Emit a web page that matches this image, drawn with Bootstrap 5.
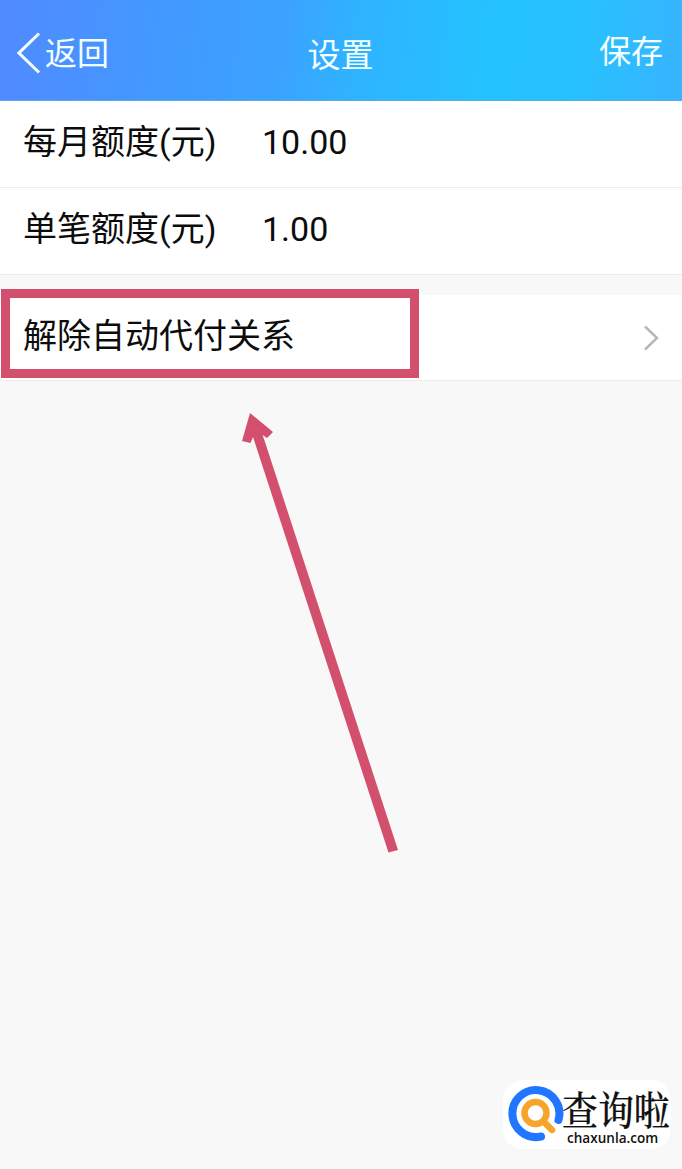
<!DOCTYPE html>
<html lang="zh-CN">
<head>
<meta charset="utf-8">
<meta name="viewport" content="width=device-width, initial-scale=1">
<title>设置</title>
<link href="https://cdn.jsdelivr.net/npm/bootstrap@5.3.0/dist/css/bootstrap.min.css" rel="stylesheet">
<style>
body{background:#f8f8f8;font-family:Roboto,"Noto Sans CJK SC",sans-serif;color:#0c0c0c;font-size:34px;line-height:50px;min-height:1169px;overflow:hidden}
.topbar{height:101px;padding:7px 19px 0 17px;background:linear-gradient(97deg,#518aff 0%,#4299ff 24%,#3ba3ff 42%,#2fb3ff 52%,#24c3ff 72%,#27c1ff 84%,#38b4ff 100%);color:#f4ffff;font-size:32px;border-bottom:1px solid #58a9e4}
.topbar .title{font-size:33px;padding:4px 0 0 1px}
.topbar .save{margin-top:-3px}
.side{width:110px}
.setting{height:87px;padding:0 23px;border-bottom:1px solid #ececec;background:#fff}
.setting.unbind{height:86px}
.setting .caption{width:239px}
.setting .txt{position:relative;top:-2px}
.gap-row{height:20px}
.marker{left:1px;top:-6px;width:418px;height:89px;border:9.5px solid #d2506d}
.pointer{left:230px;top:400px}
.watermark{left:503px;top:1080px;width:168px;height:69px;background:#fff;border-radius:20px}
.brand{left:59px;top:8px;font-family:"Noto Serif CJK SC","Noto Sans CJK SC",serif;font-weight:500;font-size:38px;line-height:40px;color:#111;-webkit-text-stroke:.2px #111;transform:scale(.945,1.04);transform-origin:0 0;white-space:nowrap}
.domain{left:64px;top:51px;font-family:"Open Sans",sans-serif;font-weight:600;font-size:14.5px;line-height:14px;color:#111;transform:scaleX(.935);transform-origin:0 0}
</style>
</head>
<body class="position-relative">
<header class="topbar d-flex align-items-center justify-content-between">
  <div class="side d-flex align-items-center">
    <svg width="28" height="44" viewBox="0 0 28 44" fill="none" stroke="#f4ffff" stroke-width="3"><path d="M22 1.500 2 21 22 40.500"/></svg>
    <span>返回</span>
  </div>
  <span class="title">设置</span>
  <div class="side save text-end"><span>保存</span></div>
</header>
<main>
  <div class="setting d-flex align-items-center"><span class="caption txt">每月额度(元)</span><span class="txt">10.00</span></div>
  <div class="setting d-flex align-items-center"><span class="caption txt">单笔额度(元)</span><span class="txt">1.00</span></div>
  <div class="gap-row"></div>
  <div class="setting unbind d-flex align-items-center justify-content-between position-relative">
    <span class="txt">解除自动代付关系</span>
    <svg width="16" height="26" viewBox="0 0 16 26" fill="none" stroke="#b8b8b8" stroke-width="2.500"><path d="M2 1.500 14 13 2 24.500"/></svg>
    <div class="marker position-absolute"></div>
  </div>
</main>
<svg class="pointer position-absolute" width="180" height="460" viewBox="230 400 180 460"><path fill="#d2506d" d="M250 413 273 432 267 438 262.500 435 265 442 398 850 388.500 852.500 254 440 253 437 250.500 443 242 441Z"/></svg>
<div class="watermark position-absolute">
  <svg width="66" height="69" viewBox="503 1080 66 69" fill="none" stroke-linecap="round"><path d="M541 1136.500A23.500 23.500 0 1 1 558.500 1120" stroke="#2176ff" stroke-width="8"/><circle cx="535.500" cy="1113" r="11" stroke="#f6a52b" stroke-width="6.500"/><path d="M544 1122 552 1130" stroke="#f6a52b" stroke-width="6.500"/></svg>
  <span class="brand position-absolute">查询啦</span>
  <span class="domain position-absolute">chaxunla.com</span>
</div>
<script src="https://cdn.jsdelivr.net/npm/bootstrap@5.3.0/dist/js/bootstrap.bundle.min.js"></script>
</body>
</html>
